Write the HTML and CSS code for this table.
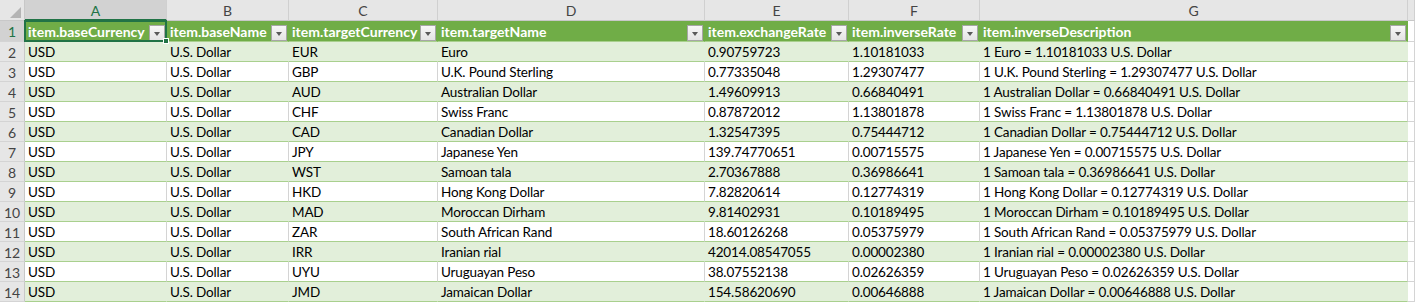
FILE: index.html
```html
<!DOCTYPE html>
<html>
<head>
<meta charset="utf-8">
<link rel="stylesheet" href="styles.css">
</head>
<body>
<div class="sheet">
  <div class="row colhdr">
    <div class="corner"><svg width="24" height="20" viewBox="0 0 24 20"><polygon points="21,7 21,18 10,18" fill="#b4b4b4"/></svg></div>
    <div class="ch sel">A</div>
    <div class="ch">B</div>
    <div class="ch">C</div>
    <div class="ch">D</div>
    <div class="ch">E</div>
    <div class="ch">F</div>
    <div class="ch">G</div>
    <div class="ch end"></div>
  </div>
  <div class="row thead">
    <div class="rh sel">1</div>
    <div class="c h active"><span>item.baseCurrency</span><i class="dd"></i><b class="selbox"></b><b class="handle"></b></div>
    <div class="c h"><span>item.baseName</span><i class="dd"></i></div>
    <div class="c h"><span>item.targetCurrency</span><i class="dd"></i></div>
    <div class="c h"><span>item.targetName</span><i class="dd"></i></div>
    <div class="c h"><span>item.exchangeRate</span><i class="dd"></i></div>
    <div class="c h"><span>item.inverseRate</span><i class="dd"></i></div>
    <div class="c h"><span>item.inverseDescription</span><i class="dd"></i></div>
    <div class="c x"></div>
  </div>
  <div class="row band"><div class="rh">2</div><div class="c">USD</div><div class="c">U.S. Dollar</div><div class="c">EUR</div><div class="c">Euro</div><div class="c">0.90759723</div><div class="c">1.10181033</div><div class="c">1 Euro = 1.10181033 U.S. Dollar</div><div class="c x"></div></div>
  <div class="row"><div class="rh">3</div><div class="c">USD</div><div class="c">U.S. Dollar</div><div class="c">GBP</div><div class="c">U.K. Pound Sterling</div><div class="c">0.77335048</div><div class="c">1.29307477</div><div class="c">1 U.K. Pound Sterling = 1.29307477 U.S. Dollar</div><div class="c x"></div></div>
  <div class="row band"><div class="rh">4</div><div class="c">USD</div><div class="c">U.S. Dollar</div><div class="c">AUD</div><div class="c">Australian Dollar</div><div class="c">1.49609913</div><div class="c">0.66840491</div><div class="c">1 Australian Dollar = 0.66840491 U.S. Dollar</div><div class="c x"></div></div>
  <div class="row"><div class="rh">5</div><div class="c">USD</div><div class="c">U.S. Dollar</div><div class="c">CHF</div><div class="c">Swiss Franc</div><div class="c">0.87872012</div><div class="c">1.13801878</div><div class="c">1 Swiss Franc = 1.13801878 U.S. Dollar</div><div class="c x"></div></div>
  <div class="row band"><div class="rh">6</div><div class="c">USD</div><div class="c">U.S. Dollar</div><div class="c">CAD</div><div class="c">Canadian Dollar</div><div class="c">1.32547395</div><div class="c">0.75444712</div><div class="c">1 Canadian Dollar = 0.75444712 U.S. Dollar</div><div class="c x"></div></div>
  <div class="row"><div class="rh">7</div><div class="c">USD</div><div class="c">U.S. Dollar</div><div class="c">JPY</div><div class="c">Japanese Yen</div><div class="c">139.74770651</div><div class="c">0.00715575</div><div class="c">1 Japanese Yen = 0.00715575 U.S. Dollar</div><div class="c x"></div></div>
  <div class="row band"><div class="rh">8</div><div class="c">USD</div><div class="c">U.S. Dollar</div><div class="c">WST</div><div class="c">Samoan tala</div><div class="c">2.70367888</div><div class="c">0.36986641</div><div class="c">1 Samoan tala = 0.36986641 U.S. Dollar</div><div class="c x"></div></div>
  <div class="row"><div class="rh">9</div><div class="c">USD</div><div class="c">U.S. Dollar</div><div class="c">HKD</div><div class="c">Hong Kong Dollar</div><div class="c">7.82820614</div><div class="c">0.12774319</div><div class="c">1 Hong Kong Dollar = 0.12774319 U.S. Dollar</div><div class="c x"></div></div>
  <div class="row band"><div class="rh">10</div><div class="c">USD</div><div class="c">U.S. Dollar</div><div class="c">MAD</div><div class="c">Moroccan Dirham</div><div class="c">9.81402931</div><div class="c">0.10189495</div><div class="c">1 Moroccan Dirham = 0.10189495 U.S. Dollar</div><div class="c x"></div></div>
  <div class="row"><div class="rh">11</div><div class="c">USD</div><div class="c">U.S. Dollar</div><div class="c">ZAR</div><div class="c">South African Rand</div><div class="c">18.60126268</div><div class="c">0.05375979</div><div class="c">1 South African Rand = 0.05375979 U.S. Dollar</div><div class="c x"></div></div>
  <div class="row band"><div class="rh">12</div><div class="c">USD</div><div class="c">U.S. Dollar</div><div class="c">IRR</div><div class="c">Iranian rial</div><div class="c">42014.08547055</div><div class="c">0.00002380</div><div class="c">1 Iranian rial = 0.00002380 U.S. Dollar</div><div class="c x"></div></div>
  <div class="row"><div class="rh">13</div><div class="c">USD</div><div class="c">U.S. Dollar</div><div class="c">UYU</div><div class="c">Uruguayan Peso</div><div class="c">38.07552138</div><div class="c">0.02626359</div><div class="c">1 Uruguayan Peso = 0.02626359 U.S. Dollar</div><div class="c x"></div></div>
  <div class="row band"><div class="rh">14</div><div class="c">USD</div><div class="c">U.S. Dollar</div><div class="c">JMD</div><div class="c">Jamaican Dollar</div><div class="c">154.58620690</div><div class="c">0.00646888</div><div class="c">1 Jamaican Dollar = 0.00646888 U.S. Dollar</div><div class="c x"></div></div>
</div>
</body>
</html>
```
FILE: styles.css
```css
* { box-sizing: border-box; }
html, body { margin: 0; padding: 0; background: #ffffff; }
body { font-family: "Lato", "Liberation Sans", sans-serif; font-size: 13.5px; letter-spacing: -0.15px; color: #000; overflow: hidden; }

.sheet {
  display: grid;
  grid-template-columns: 25px 142px 122px 149px 267px 144px 131px 428px 1fr;
  grid-template-rows: 21px 21px repeat(13, 20px);
  width: 1415px;
}
.row { display: contents; }

.corner, .ch, .rh {
  background: #e6e6e6;
  color: #444;
  display: flex;
  align-items: center;
  justify-content: center;
  border-right: 1px solid #c8c8c8;
  border-bottom: 1px solid #c8c8c8;
  white-space: nowrap;
}
.corner { padding: 0; align-items: flex-start; justify-content: flex-start; }
.corner svg { display: block; }
.ch { font-size: 14px; letter-spacing: 0; padding-top: 1px; border-right-color: #d0d0d0; }
.ch.sel { background: #d2d2d2; color: #217346; border-bottom: 2px solid #217346; }
.ch.end { background: #e6e6e6; }
.rh { font-size: 14px; letter-spacing: 0; border-bottom-color: #d4d4d4; border-right-color: #c8c8c8; padding-top: 1px; }
.rh.sel { background: #d2d2d2; color: #217346; }

.c {
  position: relative;
  display: flex;
  align-items: center;
  padding: 1px 0 0 3px;
  white-space: nowrap;
  overflow: hidden;
  border-right: 1px solid #d4d4d4;
  border-bottom: 1px solid #a9d08e;
  background: #ffffff;
}
.band .c { background: #e2efda; border-right-color: #e2efda; }
.c.x { background: #ffffff !important; border-right-color: #d4d4d4 !important; border-bottom-color: #d4d4d4; }

.thead .c.h {
  background: #70ad47;
  color: #ffffff;
  font-weight: 700;
  font-size: 14px;
  letter-spacing: 0;
  border-right-color: #70ad47;
  border-bottom-color: #a9d08e;
  overflow: visible;
  padding-right: 1px;
}
.thead .c.h span { flex: 1; overflow: hidden; }
.dd {
  flex: none;
  width: 16px;
  height: 16px;
  margin-top: 2px;
  border: 1px solid #a6a6a6;
  background: linear-gradient(#f7f7f7, #e4e4e4);
  position: relative;
}
.dd::after {
  content: "";
  position: absolute;
  left: 4px;
  top: 6px;
  border-left: 3.5px solid transparent;
  border-right: 3.5px solid transparent;
  border-top: 4px solid #595959;
}

.active { z-index: 2; }
.selbox {
  position: absolute;
  left: -1px;
  top: -1px;
  right: -1px;
  bottom: -1px;
  border: 2px solid #217346;
  pointer-events: none;
}
.handle {
  position: absolute;
  right: -3px;
  bottom: -3px;
  width: 6px;
  height: 6px;
  background: #217346;
  border: 1px solid #ffffff;
}
```
